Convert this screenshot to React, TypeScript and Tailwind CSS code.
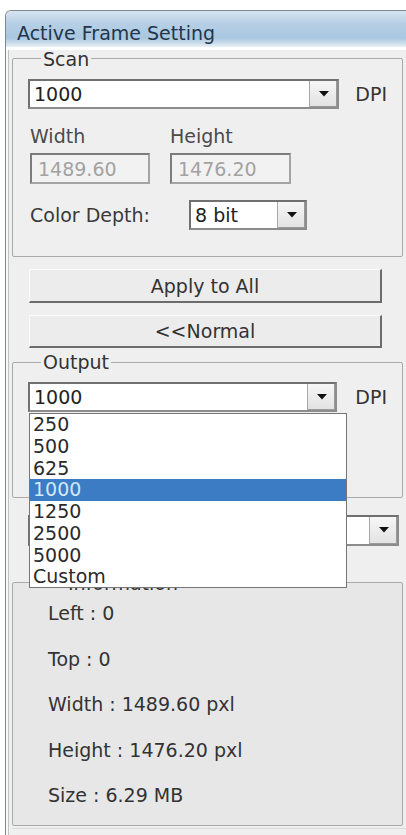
const font = "font-['DejaVu_Sans','Verdana',sans-serif]";

function Arrow() {
  return (
    <div className="flex w-[28px] items-center justify-center self-stretch border-l border-[#a8a8a8] bg-[linear-gradient(180deg,#f6f6f6,#e2e2e2)] shadow-[inset_-1px_-1px_0_#9a9a9a]">
      <svg width="10" height="6" viewBox="0 0 10 6">
        <polygon points="0,0 10,0 5,5.5" fill="#111" />
      </svg>
    </div>
  );
}

function Combo({ value, className = "" }: { value: string; className?: string }) {
  return (
    <div
      className={`flex h-[30px] border-2 border-[#8c8c8c] border-t-[#707070] border-l-[#707070] bg-white ${className}`}
    >
      <span className="flex-1 self-center pl-[4px] leading-[22px] text-[#222]">{value}</span>
      <Arrow />
    </div>
  );
}

function Disabled({ value, className = "" }: { value: string; className?: string }) {
  return (
    <div
      className={`flex h-[31px] items-center border-2 border-[#a4a4a4] border-t-[#7c7c7c] border-l-[#7c7c7c] bg-[#f2f2f2] pl-[6px] leading-[22px] text-[#a2a2a2] ${className}`}
    >
      {value}
    </div>
  );
}

function RaisedButton({ label, className = "" }: { label: string; className?: string }) {
  return (
    <button
      className={`ml-[17px] flex w-[353px] items-center justify-center border-t border-l border-t-[#fbfbfb] border-l-[#fbfbfb] border-r-2 border-b-2 border-r-[#6c6c6c] border-b-[#6c6c6c] bg-[#ececec] leading-[22px] text-[#333] ${className}`}
    >
      {label}
    </button>
  );
}

const options = ["250", "500", "625", "1000", "1250", "2500", "5000", "Custom"];

export default function App() {
  return (
    <div className={`h-[835px] w-[406px] overflow-hidden bg-white pt-[10px] pl-[5px] text-[19px] text-[#333] ${font}`}>
      <div className="overflow-hidden rounded-tl-[6px] border-t border-l border-[#7c8794]">
        {/* title bar */}
        <div className="h-[36px] bg-[linear-gradient(180deg,#d7e4ef_0%,#b6cfe5_35%,#a9c7e1_75%,#c9dbea_88%,#e9f0f6_100%)] pt-[8px] pl-[11px]">
          <span className="leading-[22px] text-[#22364a]">Active Frame Setting</span>
        </div>

        <div className="h-[800px] bg-[#efefef] pl-[6px] shadow-[inset_2px_0_0_#f8f8f8,inset_3px_0_0_#c2c2c2]">
          {/* Scan */}
          <fieldset className="mt-[2.5px] w-[391px] min-w-0 rounded-[2px] border border-[#a9a9a9] px-[15px] pt-[11.5px] pb-[26px]">
            <legend className="ml-[13px] px-[2px] leading-[18px] text-[#333]">Scan</legend>
            <div className="flex items-center gap-[16px]">
              <Combo value="1000" className="w-[315px]" />
              <span className="leading-[22px]">DPI</span>
            </div>
            <div className="mt-[15.5px] ml-[2px] flex gap-[20px] text-[#4a4a4a]">
              <div className="flex w-[120px] flex-col gap-[6.5px]">
                <span className="leading-[22px]">Width</span>
                <Disabled value="1489.60" />
              </div>
              <div className="flex w-[121px] flex-col gap-[6.5px]">
                <span className="leading-[22px]">Height</span>
                <Disabled value="1476.20" />
              </div>
            </div>
            <div className="mt-[16px] ml-[2px] flex items-center">
              <span className="w-[159px] leading-[22px] text-[#3a3a3a]">Color Depth:</span>
              <Combo value="8 bit" className="w-[118px]" />
            </div>
          </fieldset>

          <RaisedButton label="Apply to All" className="mt-[12px] h-[34px]" />
          <RaisedButton label="<<Normal" className="mt-[12px] h-[33px]" />

          {/* Output */}
          <fieldset className="mt-[5px] w-[391px] min-w-0 rounded-[2px] border border-[#a9a9a9] px-[15px] pt-[11px] pb-[85px]">
            <legend className="ml-[13px] px-[2px] leading-[18px] text-[#333]">Output</legend>
            <div className="flex items-center gap-[18px]">
              <div className="relative w-[315px]">
                <Combo value="1000" />
                <ul className="absolute top-[31px] left-[1px] z-10 h-[175px] w-[318px] border border-[#777] bg-white">
                  {options.map((o) => (
                    <li
                      key={o}
                      className={`h-[21.75px] pl-[3px] leading-[21.75px] ${
                        o === "1000" ? "bg-[#3b7cc5] text-[#d3e7fb]" : "text-[#2a2a2a]"
                      }`}
                    >
                      {o}
                    </li>
                  ))}
                </ul>
              </div>
              <span className="leading-[22px]">DPI</span>
            </div>
          </fieldset>

          <Combo value="8 bit" className="mt-[16.5px] ml-[16px] h-[31px] w-[371px]" />

          {/* Information */}
          <fieldset className="mt-[28px] w-[391px] min-w-0 rounded-[2px] border border-[#a9a9a9] bg-[#e7e7e7] pt-[10.5px] pb-[18.5px] pl-[35px]">
            <legend className="ml-[18px] px-[2px] leading-[18px] text-[#333]">Information</legend>
            <div className="flex flex-col text-[#333]">
              <span className="h-[45.5px] leading-[22px]">Left : 0</span>
              <span className="h-[45.5px] leading-[22px]">Top : 0</span>
              <span className="h-[45.5px] leading-[22px]">Width : 1489.60 pxl</span>
              <span className="h-[45.5px] leading-[22px]">Height : 1476.20 pxl</span>
              <span className="h-[22px] leading-[22px]">Size : 6.29 MB</span>
            </div>
          </fieldset>
          <div className="mt-[2px] h-[1px] w-[400px] bg-[#dadada]" />
        </div>
      </div>
    </div>
  );
}
